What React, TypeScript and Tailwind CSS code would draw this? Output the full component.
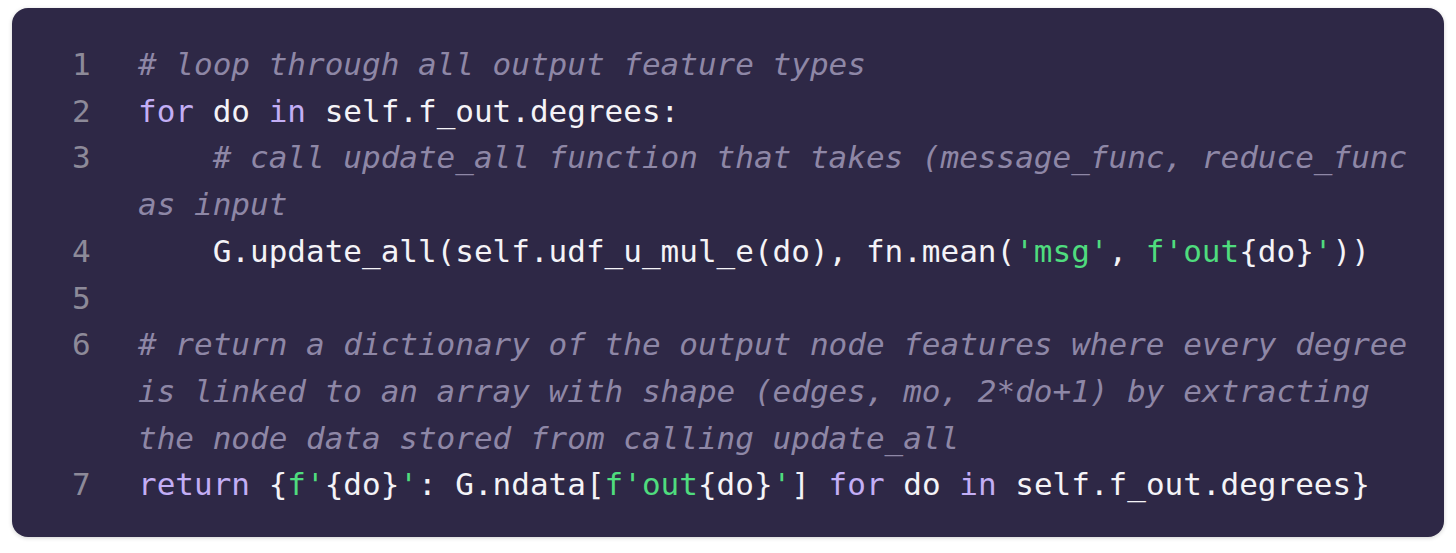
type Tok = { t: string; c?: "k" | "s" | "c" };

const k = (t: string): Tok => ({ t, c: "k" });
const s = (t: string): Tok => ({ t, c: "s" });
const p = (t: string): Tok => ({ t });
const cm = (t: string): Tok => ({ t, c: "c" });

const lines: { n?: number; toks: Tok[] }[] = [
  { n: 1, toks: [cm("# loop through all output feature types")] },
  { n: 2, toks: [k("for"), p(" do "), k("in"), p(" self.f_out.degrees:")] },
  { n: 3, toks: [p("    "), cm("# call update_all function that takes (message_func, reduce_func")] },
  { toks: [cm("as input")] },
  {
    n: 4,
    toks: [
      p("    G.update_all(self.udf_u_mul_e(do), fn.mean("),
      s("'msg'"),
      p(", "),
      s("f'out"),
      p("{do}"),
      s("'"),
      p("))"),
    ],
  },
  { n: 5, toks: [p("")] },
  { n: 6, toks: [cm("# return a dictionary of the output node features where every degree")] },
  { toks: [cm("is linked to an array with shape (edges, mo, 2*do+1) by extracting")] },
  { toks: [cm("the node data stored from calling update_all")] },
  {
    n: 7,
    toks: [
      k("return"),
      p(" {"),
      s("f'"),
      p("{do}"),
      s("'"),
      p(": G.ndata["),
      s("f'out"),
      p("{do}"),
      s("'"),
      p("] "),
      k("for"),
      p(" do "),
      k("in"),
      p(" self.f_out.degrees}"),
    ],
  },
];

const color = {
  k: "text-[#c3aef5]",
  s: "text-[#4fdc7e]",
  c: "text-[#8e87a6] italic",
};

export default function App() {
  return (
    <div className="min-h-[553px] w-[1456px] bg-white pl-[12px] pt-[8px]">
      <div className="flex h-[529px] w-[1432px] flex-col rounded-[16px] bg-[#2e2846] pl-[60px] pt-[33px] shadow-[0_1px_4px_rgba(0,0,0,0.18)] font-['DejaVu_Sans_Mono',monospace] text-[31px] leading-[46.7px] text-[#f4f3f7]">
        {lines.map((l, i) => (
          <div key={i} className="flex whitespace-pre">
            <span className="w-[66px] shrink-0 text-[#8d8a99]">{l.n ?? ""}</span>
            <span>
              {l.toks.map((tk, j) => (
                <span key={j} className={tk.c ? color[tk.c] : ""}>
                  {tk.t}
                </span>
              ))}
            </span>
          </div>
        ))}
      </div>
    </div>
  );
}
